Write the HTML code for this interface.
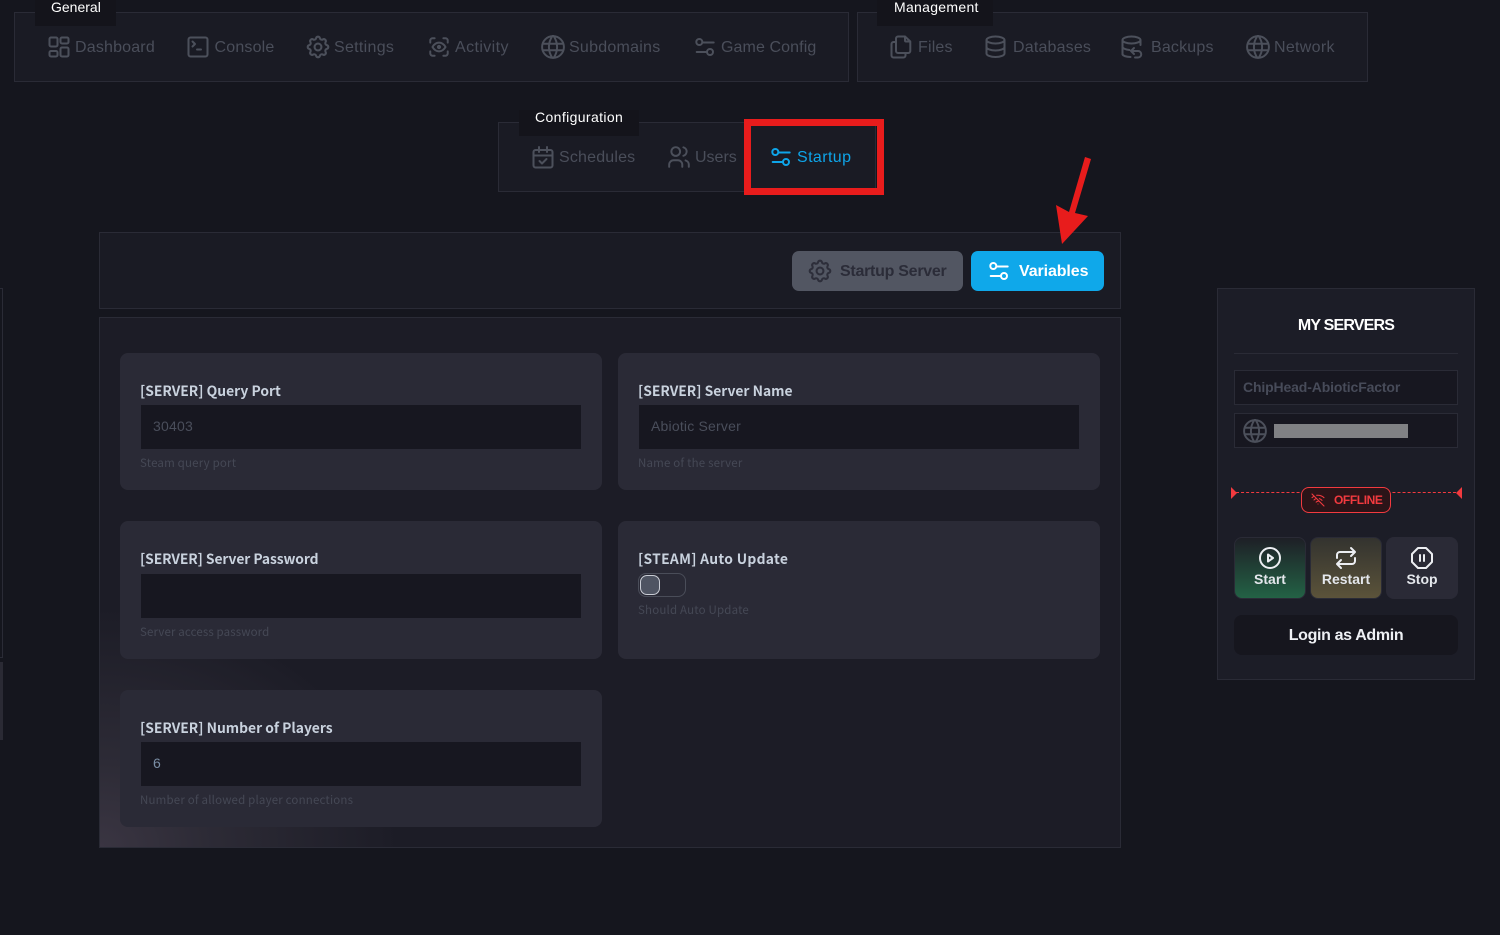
<!DOCTYPE html>
<html><head><meta charset="utf-8"><style>
html,body{margin:0;padding:0;background:#15161e}
body{width:1500px;height:935px;overflow:hidden;position:relative;font-family:"Liberation Sans",sans-serif}
div,span,svg{position:absolute;box-sizing:border-box}
svg{fill:none;stroke:currentColor;stroke-width:2;stroke-linecap:round;stroke-linejoin:round}
.panel{background:#1a1b24;border:1px solid #2a2b36}
.lab{background:#14141b;height:26px;color:#fff;font-size:14px;line-height:14px}
.lab span{white-space:nowrap}
.nav{color:#4a4e5a;font-size:16px;line-height:20px;top:36px;white-space:nowrap;letter-spacing:.18px;margin-top:1.5px}
.ic{color:#4c505b;width:24px;height:24px}
.card{background:#2a2a36;border-radius:8px;width:482px}
.l{font-family:"Noto Sans CJK JP","Liberation Sans",sans-serif;font-weight:700;font-size:13.85px;line-height:18px;color:#c9d2de;white-space:nowrap;left:20px;margin-top:-1px}
.in{background:#171720;left:21px;width:440px;height:44px;color:#4a4e5b;font-size:14px;line-height:42px;padding-left:12px;letter-spacing:.2px}
.h{font-family:"Noto Sans CJK JP","Liberation Sans",sans-serif;font-size:11.5px;line-height:16px;color:#454855;white-space:nowrap;left:20px;letter-spacing:.18px}
.act{top:537px;width:72px;height:62px;border-radius:8px;border:1px solid #2a2b36}
.act svg{left:23px;top:8px;width:24px;height:24px;color:#eceef2}
.act span{left:0;width:100%;text-align:center;top:32px;font-weight:700;font-size:14px;line-height:18px;color:#e4e7ec}
</style></head><body>
<svg width="0" height="0" style="position:absolute"><defs>
<symbol id="dash" viewBox="0 0 24 24"><path d="M2.500 4a1.500 1.500 0 0 1 1.500 -1.500h5a1.500 1.500 0 0 1 1.500 1.500v6a1.500 1.500 0 0 1 -1.500 1.500h-5a1.500 1.500 0 0 1 -1.500 -1.500z M2.500 17.500a1.500 1.500 0 0 1 1.500 -1.500h5a1.500 1.500 0 0 1 1.500 1.500v2.500a1.500 1.500 0 0 1 -1.500 1.500h-5a1.500 1.500 0 0 1 -1.500 -1.500z M13.500 14a1.500 1.500 0 0 1 1.500 -1.500h5a1.500 1.500 0 0 1 1.500 1.500v6a1.500 1.500 0 0 1 -1.500 1.500h-5a1.500 1.500 0 0 1 -1.500 -1.500z M13.500 4a1.500 1.500 0 0 1 1.500 -1.500h5a1.500 1.500 0 0 1 1.500 1.500v3a1.500 1.500 0 0 1 -1.500 1.500h-5a1.500 1.500 0 0 1 -1.500 -1.500z"/></symbol>
<symbol id="term" viewBox="0 0 24 24"><path d="M6.500 6.500l2.500 2.500l-2.500 2.500 M11 14.500h4 M2.500 4.500a2 2 0 0 1 2 -2h15a2 2 0 0 1 2 2v15a2 2 0 0 1 -2 2h-15a2 2 0 0 1 -2 -2z"/></symbol>
<symbol id="gear" viewBox="1.500 1.500 21 21"><path stroke-width="1.800" d="M10.325 4.317c.426 -1.756 2.924 -1.756 3.35 0a1.724 1.724 0 0 0 2.573 1.066c1.543 -.94 3.31 .826 2.37 2.37a1.724 1.724 0 0 0 1.065 2.572c1.756 .426 1.756 2.924 0 3.35a1.724 1.724 0 0 0 -1.066 2.573c.94 1.543 -.826 3.31 -2.37 2.37a1.724 1.724 0 0 0 -2.572 1.065c-.426 1.756 -2.924 1.756 -3.35 0a1.724 1.724 0 0 0 -2.573 -1.066c-1.543 .94 -3.31 -.826 -2.37 -2.37a1.724 1.724 0 0 0 -1.065 -2.572c-1.756 -.426 -1.756 -2.924 0 -3.35a1.724 1.724 0 0 0 1.066 -2.573c-.94 -1.543 .826 -3.31 2.37 -2.37c1 .608 2.296 .07 2.572 -1.065z M9 12a3 3 0 1 0 6 0a3 3 0 0 0 -6 0"/></symbol>
<symbol id="eye" viewBox="1 1 22 22"><path stroke-width="1.800" d="M4 8v-2a2 2 0 0 1 2 -2h2 M4 16v2a2 2 0 0 0 2 2h2 M16 4h2a2 2 0 0 1 2 2v2 M16 20h2a2 2 0 0 0 2 -2v-2 M11 12a1 1 0 1 0 2 0a1 1 0 0 0 -2 0 M18 12c-1.6 2.667 -3.6 4 -6 4s-4.4 -1.333 -6 -4c1.6 -2.667 3.6 -4 6 -4s4.4 1.333 6 4"/></symbol>
<symbol id="world" viewBox="1 1 22 22"><path stroke-width="1.800" d="M2 12a10 10 0 1 0 20 0a10 10 0 0 0 -20 0 M2.600 9h18.800 M2.600 15h18.800 M11.500 2a17 17 0 0 0 0 20 M12.500 2a17 17 0 0 1 0 20"/></symbol>
<symbol id="adj" viewBox="0 0 24 24"><path d="M3.300 7a3 3 0 1 0 6 0a3 3 0 1 0 -6 0 M9.300 7.500h11.400 M14 17a3 3 0 1 0 6 0a3 3 0 1 0 -6 0 M3.700 17h10.300"/></symbol>
<symbol id="files" viewBox="0 0 24 24"><path d="M15 1.500v4a1 1 0 0 0 1 1h4.300 M18.300 18h-10.300a2 2 0 0 1 -2 -2v-12.500a2 2 0 0 1 2 -2h7l5.300 5v9.500a2 2 0 0 1 -2 2z M15.500 18v2.500a2 2 0 0 1 -2 2h-10a2 2 0 0 1 -2 -2v-11.500a2 2 0 0 1 2 -2h2.500"/></symbol>
<symbol id="db" viewBox="0 0 24 24"><path d="M1.500 5a9 3.500 0 1 0 18 0a9 3.500 0 1 0 -18 0 M1.500 5v7a9 3.500 0 0 0 18 0v-7 M1.500 12v6.500a9 3.500 0 0 0 18 0v-6.500"/></symbol>
<symbol id="bk" viewBox="0 0 24 24"><path d="M1.500 5a9 3.500 0 1 0 18 0a9 3.500 0 1 0 -18 0 M1.500 5v14.500a9 3 0 0 0 8 2.500 M19.500 5v5 M1.500 12a9 3.500 0 0 0 7 3 M13 13l-3 3l3 3 M10 16h7a3.200 3.200 0 0 1 0 6.500h-3"/></symbol>
<symbol id="cal" viewBox="0 0 24 24"><path d="M2.500 7a2 2 0 0 1 2 -2h15a2 2 0 0 1 2 2v13.500a2 2 0 0 1 -2 2h-15a2 2 0 0 1 -2 -2z M16 2v5 M8 2v5 M2.500 10.500h19 M8.500 16l2.500 2.500l4.500 -4.500"/></symbol>
<symbol id="users" viewBox="1 1 22 22"><path stroke-width="1.800" d="M5 7a4 4 0 1 0 8 0a4 4 0 1 0 -8 0 M3 21v-2a4 4 0 0 1 4 -4h4a4 4 0 0 1 4 4v2 M16 3.130a4 4 0 0 1 0 7.750 M21 21v-2a4 4 0 0 0 -3 -3.850"/></symbol>
</defs></svg>

<div style="left:0;top:288px;width:3px;height:370px;border:1px solid #2a2b36;border-left:0;background:#15161e"></div>
<div style="left:0;top:662px;width:3px;height:78px;background:#2a2a34"></div>

<div class="panel" style="left:14px;top:12px;width:835px;height:70px"></div>
<div class="lab" style="left:35px;top:0;width:81px"><span style="left:16px;top:0">General</span></div>
<svg class="ic" style="left:47px;top:35px"><use href="#dash"/></svg><span class="nav" style="left:75px">Dashboard</span>
<svg class="ic" style="left:186px;top:35px"><use href="#term"/></svg><span class="nav" style="left:214.500px">Console</span>
<svg class="ic" style="left:306px;top:35px"><use href="#gear"/></svg><span class="nav" style="left:334px;letter-spacing:.3px">Settings</span>
<svg class="ic" style="left:427px;top:35px"><use href="#eye"/></svg><span class="nav" style="left:455px;letter-spacing:.4px">Activity</span>
<svg class="ic" style="left:541px;top:35px"><use href="#world"/></svg><span class="nav" style="left:569px;letter-spacing:.25px">Subdomains</span>
<svg class="ic" style="left:693px;top:35px"><use href="#adj"/></svg><span class="nav" style="left:721px;letter-spacing:.1px">Game Config</span>

<div class="panel" style="left:857px;top:12px;width:511px;height:70px"></div>
<div class="lab" style="left:877px;top:0;width:116px"><span style="left:17px;top:0;letter-spacing:.3px">Management</span></div>
<svg class="ic" style="left:890px;top:35px"><use href="#files"/></svg><span class="nav" style="left:918px">Files</span>
<svg class="ic" style="left:985px;top:35px"><use href="#db"/></svg><span class="nav" style="left:1013px">Databases</span>
<svg class="ic" style="left:1121px;top:35px"><use href="#bk"/></svg><span class="nav" style="left:1151px">Backups</span>
<svg class="ic" style="left:1246px;top:35px"><use href="#world"/></svg><span class="nav" style="left:1274px;letter-spacing:.3px">Network</span>

<div class="panel" style="left:498px;top:122px;width:378px;height:70px"></div>
<div class="lab" style="left:519px;top:110px;width:120px;height:26px"><span style="left:16px;top:0;letter-spacing:.38px">Configuration</span></div>
<svg class="ic" style="left:531px;top:145px"><use href="#cal"/></svg><span class="nav" style="left:559px;top:146px">Schedules</span>
<svg class="ic" style="left:667px;top:145px"><use href="#users"/></svg><span class="nav" style="left:695px;top:146px;letter-spacing:0">Users</span>
<svg class="ic" style="left:769px;top:145px;color:#0ea5e9"><use href="#adj"/></svg><span class="nav" style="left:797px;top:146px;color:#0ea5e9;letter-spacing:.4px">Startup</span>
<div style="left:744px;top:119px;width:140px;height:76px;border:7px solid #e81c1c"></div>

<div class="panel" style="left:99px;top:232px;width:1022px;height:77px"></div>
<div style="left:792px;top:251px;width:171px;height:40px;border-radius:7px;background:#525662"></div>
<svg class="ic" style="left:808px;top:259px;color:#2d2e3a"><use href="#gear"/></svg>
<span style="left:840px;top:261px;margin-top:.5px;font-weight:700;font-size:16px;line-height:20px;color:#2b2c38;white-space:nowrap;letter-spacing:-.27px">Startup Server</span>
<div style="left:971px;top:251px;width:133px;height:40px;border-radius:7px;background:#0fa8ea"></div>
<svg class="ic" style="left:987px;top:259px;color:#fff"><use href="#adj"/></svg>
<span style="left:1019px;top:261px;margin-top:.5px;font-weight:700;font-size:16px;line-height:20px;color:#fff;white-space:nowrap;letter-spacing:-.1px">Variables</span>

<div class="panel" style="left:99px;top:317px;width:1022px;height:531px;background:radial-gradient(ellipse 300px 240px at 0% 100%,#3a3542 0%,#2d2b36 35%,#1c1c26 100%),#1c1c26"></div>

<div class="card" style="left:120px;top:353px;height:137px"><span class="l" style="top:29px">[SERVER] Query Port</span><div class="in" style="top:52px">30403</div><span class="h" style="top:102px">Steam query port</span></div>
<div class="card" style="left:618px;top:353px;height:137px"><span class="l" style="top:29px">[SERVER] Server Name</span><div class="in" style="top:52px">Abiotic Server</div><span class="h" style="top:102px">Name of the server</span></div>
<div class="card" style="left:120px;top:521px;height:138px"><span class="l" style="top:29px;letter-spacing:-.08px">[SERVER] Server Password</span><div class="in" style="top:53px"></div><span class="h" style="top:103px;letter-spacing:.13px">Server access password</span></div>
<div class="card" style="left:618px;top:521px;height:138px"><span class="l" style="top:29px;letter-spacing:.3px">[STEAM] Auto Update</span>
<div style="left:20px;top:52px;width:48px;height:24px;border-radius:8px;border:1px solid #4a4d59"></div>
<div style="left:22px;top:54px;width:20px;height:20px;border-radius:7px;background:#4f5462;border:1px solid #c9ccd4"></div>
<span class="h" style="top:81px">Should Auto Update</span></div>
<div class="card" style="left:120px;top:690px;height:137px"><span class="l" style="top:29px">[SERVER] Number of Players</span><div class="in" style="top:52px;color:#7b8fa6">6</div><span class="h" style="top:102px">Number of allowed player connections</span></div>

<svg style="left:1050px;top:150px;stroke:none;fill:#e81c1c" width="50" height="100"><path d="M35 7L41 9L25 63L38 66L12 94L6 55L19 62z"/></svg>

<div class="panel" style="left:1217px;top:288px;width:258px;height:392px;background:#1c1d27"></div>
<span style="left:1217px;width:258px;text-align:center;top:316px;font-weight:700;font-size:16px;line-height:20px;color:#fff;letter-spacing:-.8px">MY SERVERS</span>
<div style="left:1234px;top:353px;width:224px;height:1px;background:#2a2b36"></div>
<div style="left:1234px;top:370px;width:224px;height:35px;background:#171720;border:1px solid #2a2b36"></div>
<span style="left:1243px;top:379px;font-weight:700;font-size:14px;line-height:17px;color:#474b59;white-space:nowrap;letter-spacing:-.14px">ChipHead-AbioticFactor</span>
<div style="left:1234px;top:413px;width:224px;height:35px;background:#171720;border:1px solid #2a2b36"></div>
<svg class="ic" style="left:1243px;top:419px"><use href="#world"/></svg>
<div style="left:1274px;top:424px;width:134px;height:14px;background:#808184"></div>

<div style="left:1236px;top:492px;width:220px;border-top:1px dashed #f23a3f"></div>
<svg style="left:1231px;top:487px;stroke:none;fill:#f23a3f" width="6" height="12"><path d="M0 0L6 6L0 12z"/></svg>
<svg style="left:1456px;top:487px;stroke:none;fill:#f23a3f" width="6" height="12"><path d="M6 0L0 6L6 12z"/></svg>
<div style="left:1301px;top:487px;width:90px;height:26px;border:1px solid #f23a3f;border-radius:8px;background:#2b1418"></div>
<svg style="left:1310px;top:492px;color:#f23a3f;stroke-width:1.600" width="16" height="16" viewBox="0 0 24 24"><path d="M12 18h.01 M9.200 15.200a4 4 0 0 1 2.800 -1.200 M6 12a9 9 0 0 1 3 -2 M14 10a9 9 0 0 1 4 2.500 M3 8.500a14 14 0 0 1 3 -2 M10 5a14 14 0 0 1 11 3.500 M3 3l18 18"/></svg>
<span style="left:1334px;top:493px;font-weight:700;font-size:12px;line-height:15px;color:#f23a3f;white-space:nowrap;letter-spacing:-.4px">OFFLINE</span>

<div class="act" style="left:1234px;background:linear-gradient(#1e1f26,#236245)"><svg viewBox="0 0 24 24"><path d="M2 12a10 10 0 1 0 20 0a10 10 0 0 0 -20 0 M10 8.500l5 3.500l-5 3.500z"/></svg><span>Start</span></div>
<div class="act" style="left:1310px;background:linear-gradient(#33332f,#5b533a)"><svg viewBox="0 0 24 24"><path d="M3 12v-3a3 3 0 0 1 3 -3h15m-4 -4l4 4l-4 4 M21 12v3a3 3 0 0 1 -3 3h-15m4 4l-4 -4l4 -4"/></svg><span>Restart</span></div>
<div class="act" style="left:1386px;background:#2a2a36;border-color:#2a2a36"><svg viewBox="0 0 24 24"><path d="M8 2h8l6 6v8l-6 6h-8l-6 -6v-8z M10 9v6 M14 9v6"/></svg><span>Stop</span></div>
<div style="left:1234px;top:615px;width:224px;height:40px;border-radius:8px;background:#16161e"></div>
<span style="left:1234px;width:224px;text-align:center;top:626px;font-weight:700;font-size:16px;line-height:20px;color:#eef0f4;letter-spacing:-.35px">Login as Admin</span>
</body></html>
